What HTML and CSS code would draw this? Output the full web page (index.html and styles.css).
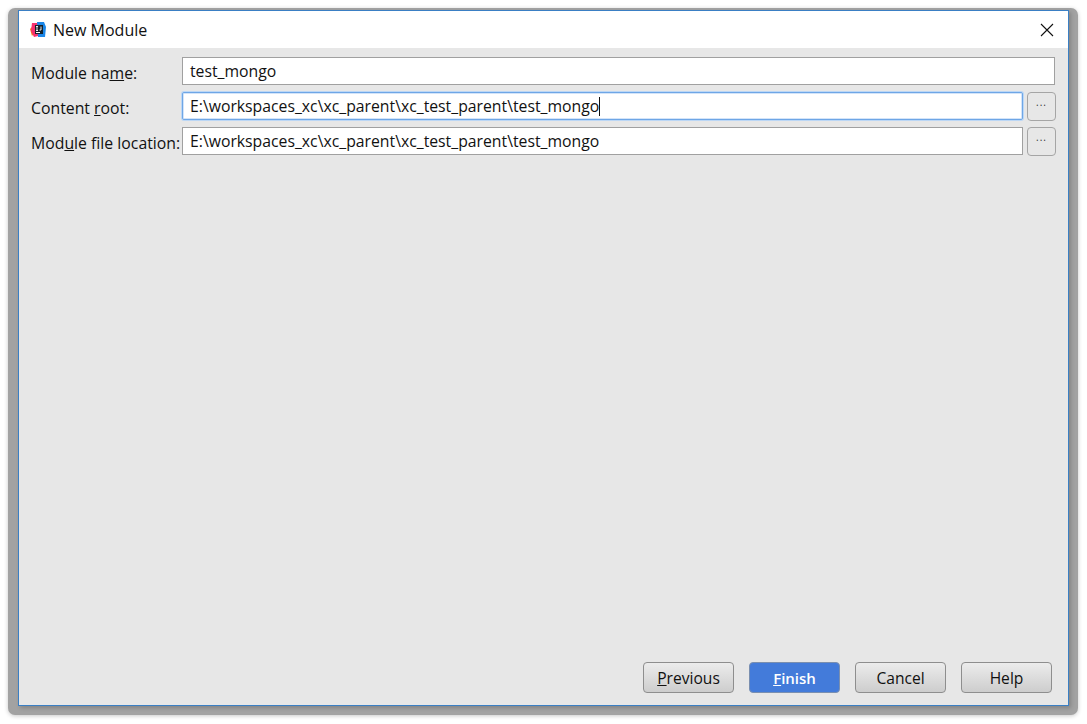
FILE: index.html
```html
<!DOCTYPE html>
<html lang="en">
<head>
<meta charset="utf-8">
<title>New Module</title>
<link rel="stylesheet" href="styles.css">
</head>
<body>
<div class="shadow">
  <div class="window">
    <header class="titlebar">
      <svg class="logo" width="16" height="16" viewBox="0 0 16 16">
        <path d="M0 7 L3 4 L5 10 L2 14 Z" fill="#f97a12"/>
        <path d="M2 1 L8 1 L8 14 L4 15 L1 9 Z" fill="#f5316f"/>
        <path d="M7 0 L14 0 L16 5 L15 15 L8 15 Z" fill="#1b87e8"/>
        <rect x="5" y="3" width="8" height="9" fill="#14212b"/>
        <rect x="6" y="10" width="4" height="1" fill="#fff"/>
        <path d="M6 4.5 H8 M7 4.5 V8.5 M6 8.5 H8 M11 4.5 V8 H9.5" fill="none" stroke="#fff" stroke-width="0.9"/>
      </svg>
      <span class="title">New Module</span>
      <svg class="close" width="14" height="14" viewBox="0 0 14 14">
        <path d="M1 1 L13 13 M13 1 L1 13" stroke="#111" stroke-width="1.1" fill="none"/>
      </svg>
    </header>
    <main class="content">
      <div class="form">
        <label class="label">Module na<u>m</u>e:</label>
        <div class="input wide">test_mongo</div>

        <label class="label">Content <u>r</u>oot:</label>
        <div class="input focused">E:\workspaces_xc\xc_parent\xc_test_parent\test_mongo<span class="caret"></span></div>
        <button class="browse" type="button">...</button>

        <label class="label">Mod<u>u</u>le file location:</label>
        <div class="input">E:\workspaces_xc\xc_parent\xc_test_parent\test_mongo</div>
        <button class="browse" type="button">...</button>
      </div>
      <footer class="actions">
        <button class="btn" type="button"><u>P</u>revious</button>
        <button class="btn primary" type="button"><u>F</u>inish</button>
        <button class="btn" type="button">Cancel</button>
        <button class="btn" type="button">Help</button>
      </footer>
    </main>
  </div>
</div>
</body>
</html>
```
FILE: styles.css
```css
* { box-sizing: border-box; }
html, body { margin: 0; height: 724px; overflow: hidden; background: #fff; }
body { padding: 8px; font-family: "Open Sans", "Noto Sans", sans-serif; font-size: 15.78px; color: #111; }
.shadow {
  width: 1070px;
  height: 707px;
  padding: 2px 9px 9px 10px;
  background: #a2a2a2;
  border-radius: 7px;
  box-shadow: 0 1px 4px rgba(0,0,0,.22);
}
.window {
  height: 100%;
  display: flex;
  flex-direction: column;
  border: 1px solid #3a7fc4;
  background: #e7e7e7;
  box-shadow: 2px 2px 4px rgba(0,0,0,.18);
}
.titlebar {
  height: 37px;
  flex: none;
  display: flex;
  align-items: center;
  padding: 0 14px 0 11px;
  background: #fff;
}
.logo { flex: none; }
.title { margin-left: 7px; flex: 1; font-size: 16px; }
.content {
  flex: 1;
  display: flex;
  flex-direction: column;
  justify-content: space-between;
  padding: 9px 12px 12px 12px;
}
.form {
  display: grid;
  grid-template-columns: 151px 841px 33px;
  grid-auto-rows: 28px;
  row-gap: 7px;
  align-items: center;
}
.label { white-space: nowrap; padding-top: 3px; font-size: 15.8px; }
.input {
  height: 28px;
  border: 1px solid #a0a0a0;
  background: #fff;
  padding: 0 7px;
  line-height: 26px;
  white-space: nowrap;
}
.input.wide { grid-column: 2 / 4; margin-right: 1px; }
.input.focused {
  border: 1px solid #6ea6e6;
  border-radius: 2px;
  box-shadow: 0 0 0 1px #bcd7f5, inset 0 0 0 1px #d3e4f9;
}
.caret {
  display: inline-block;
  width: 1px;
  height: 19px;
  background: #111;
  vertical-align: -4px;
}
.browse {
  justify-self: end;
  width: 29px;
  height: 29px;
  padding: 0 0 8px;
  border: 1px solid #a5a5a5;
  border-radius: 4px;
  background: #e7e7e7;
  font: 10px "Open Sans", sans-serif;
  letter-spacing: 1px;
  color: #333;
}
.actions {
  display: flex;
  justify-content: flex-end;
  gap: 15px;
  padding-right: 4px;
}
.btn {
  width: 91px;
  height: 31px;
  padding: 0;
  border: 1px solid #8e8e8e;
  border-radius: 4px;
  background: linear-gradient(#ececec, #cdcdcd);
  font: 15.6px "Open Sans", "Noto Sans", sans-serif;
  color: #111;
}
.btn.primary {
  border-color: #7a8fb0;
  background: #437bda;
  color: #fff;
  font-weight: 600;
  font-size: 15px;
}
```
